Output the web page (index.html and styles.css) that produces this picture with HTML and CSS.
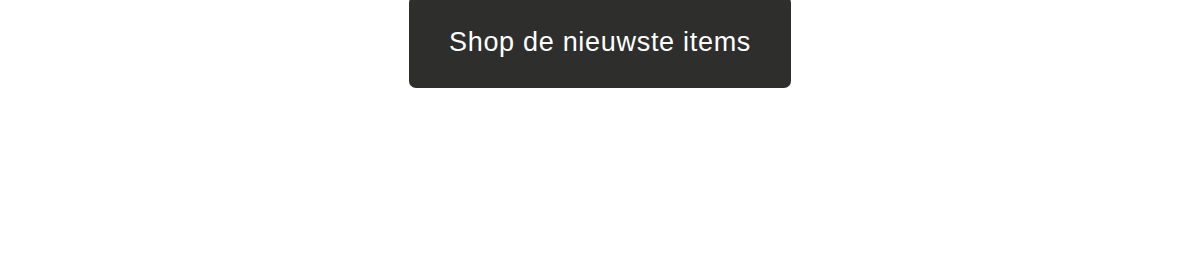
FILE: index.html
```html
<!DOCTYPE html>
<html lang="nl">
<head>
<meta charset="utf-8">
<title>Shop</title>
<link rel="stylesheet" href="styles.css">
</head>
<body>
<div class="cta-wrap">
  <a class="cta" href="#">Shop de nieuwste items</a>
</div>
</body>
</html>
```
FILE: styles.css
```css
html, body {
  margin: 0;
  padding: 0;
  background: #ffffff;
}
.cta-wrap {
  display: flex;
  justify-content: center;
  margin-top: -4px;
}
.cta {
  display: flex;
  align-items: center;
  justify-content: center;
  box-sizing: border-box;
  width: 382px;
  height: 92px;
  padding-top: 1px;
  background: #2e2e2d;
  color: #ffffff;
  border-radius: 7px;
  font-family: "Liberation Sans", Arial, sans-serif;
  font-size: 27px;
  text-decoration: none;
  letter-spacing: 0.7px;
}
```
